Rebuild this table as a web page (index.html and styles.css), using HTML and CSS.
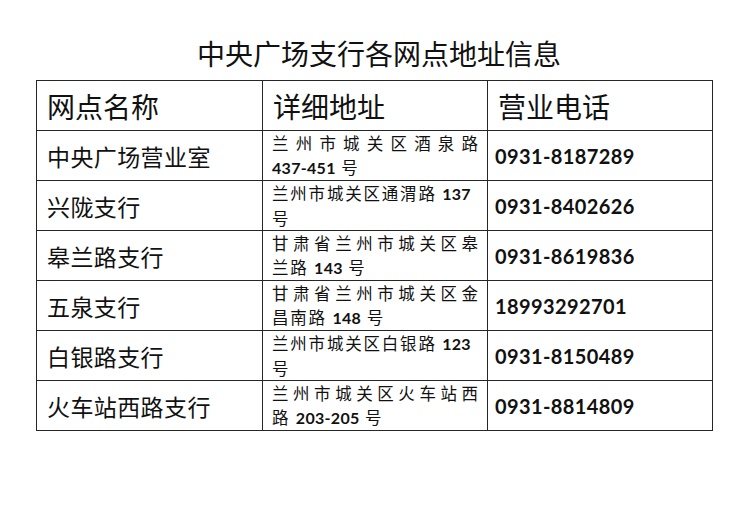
FILE: index.html
```html
<!DOCTYPE html>
<html lang="zh-CN">
<head>
<meta charset="utf-8">
<title>中央广场支行各网点地址信息</title>
<link rel="stylesheet" href="styles.css">
</head>
<body>
<div class="page">
  <h1 class="title">中央广场支行各网点地址信息</h1>
  <table class="branches">
    <colgroup>
      <col class="c-name">
      <col class="c-addr">
      <col class="c-tel">
    </colgroup>
    <thead>
      <tr>
        <th>网点名称</th>
        <th>详细地址</th>
        <th>营业电话</th>
      </tr>
    </thead>
    <tbody>
      <tr>
        <td class="name">中央广场营业室</td>
        <td class="addr"><span class="jl">兰州市城关区酒泉路</span><span class="ln"><b>437-451</b> 号</span></td>
        <td class="tel">0931-8187289</td>
      </tr>
      <tr>
        <td class="name">兴陇支行</td>
        <td class="addr"><span class="ln">兰州市城关区通渭路 <b>137</b></span><span class="ln">号</span></td>
        <td class="tel">0931-8402626</td>
      </tr>
      <tr>
        <td class="name">皋兰路支行</td>
        <td class="addr"><span class="jl">甘肃省兰州市城关区皋</span><span class="ln">兰路 <b>143</b> 号</span></td>
        <td class="tel">0931-8619836</td>
      </tr>
      <tr>
        <td class="name">五泉支行</td>
        <td class="addr"><span class="jl">甘肃省兰州市城关区金</span><span class="ln">昌南路 <b>148</b> 号</span></td>
        <td class="tel">18993292701</td>
      </tr>
      <tr>
        <td class="name">白银路支行</td>
        <td class="addr"><span class="ln">兰州市城关区白银路 <b>123</b></span><span class="ln">号</span></td>
        <td class="tel">0931-8150489</td>
      </tr>
      <tr>
        <td class="name">火车站西路支行</td>
        <td class="addr"><span class="jl">兰州市城关区火车站西</span><span class="ln">路 <b>203-205</b> 号</span></td>
        <td class="tel">0931-8814809</td>
      </tr>
    </tbody>
  </table>
</div>
</body>
</html>
```
FILE: styles.css
```css
html, body {
  margin: 0;
  padding: 0;
  background: #ffffff;
}

body {
  width: 750px;
  height: 520px;
  overflow: hidden;
  color: #111111;
  font-family: "Noto Sans CJK SC", sans-serif;
}

.page {
  padding: 38px 0 0 36px;
}

.title {
  margin: 0 0 12px 0;
  width: 676px;
  padding-left: 10px;
  box-sizing: border-box;
  text-align: center;
  font-size: 28px;
  line-height: 30px;
  font-weight: 400;
}

.branches {
  border-collapse: collapse;
  table-layout: fixed;
  width: 676px;
  border: 1px solid #222222;
}

.c-name { width: 226px; }
.c-addr { width: 225px; }
.c-tel  { width: 225px; }

.branches th,
.branches td {
  border: 1px solid #262626;
  height: 49px;
  padding: 0;
  vertical-align: middle;
  text-align: left;
}

.branches th {
  font-size: 28px;
  font-weight: 400;
  padding-left: 10px;
  line-height: 34px;
}

.branches td.name {
  font-size: 23px;
  line-height: 30px;
  padding-left: 10px;
  letter-spacing: 0.4px;
}

.branches td.addr {
  font-size: 16.5px;
  line-height: 24px;
  padding: 0 9px 0 9px;
}

.addr .ln {
  display: block;
  white-space: nowrap;
  letter-spacing: 1.8px;
}

.addr .jl {
  display: block;
  text-align: justify;
  text-align-last: justify;
  white-space: nowrap;
}

.addr b {
  font-family: "Lato", "Liberation Sans", sans-serif;
  font-weight: 700;
  font-size: 16px;
  letter-spacing: 0.3px;
}

.branches td.tel {
  font-family: "Lato", "Liberation Sans", sans-serif;
  font-weight: 700;
  font-size: 20px;
  letter-spacing: 0.4px;
  padding-left: 7px;
  line-height: 26px;
}
```
